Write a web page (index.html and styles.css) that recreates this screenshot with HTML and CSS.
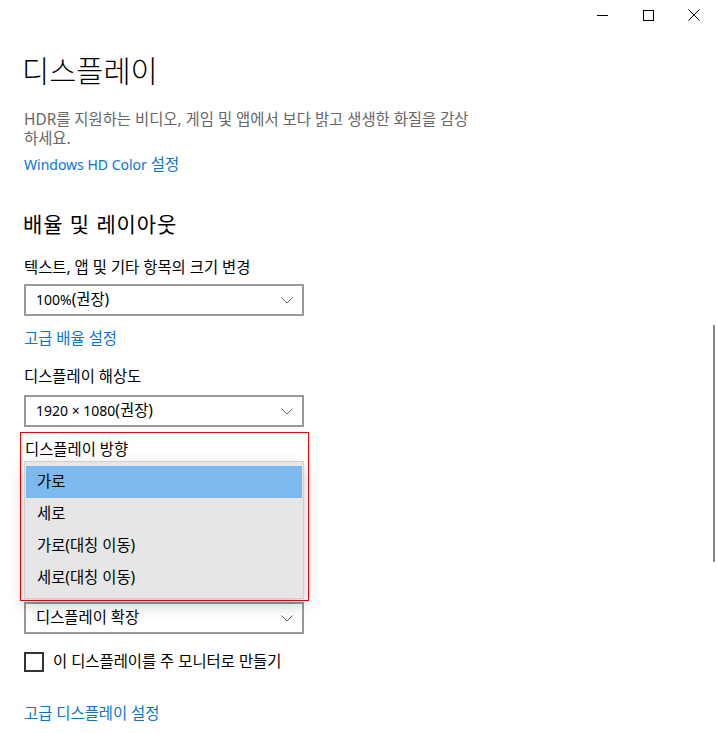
FILE: index.html
```html
<!DOCTYPE html>
<html lang="ko">
<head>
<meta charset="utf-8">
<title>디스플레이</title>
<link rel="stylesheet" href="styles.css">
</head>
<body>
<div class="window">
  <div class="titlebar">
    <div class="cap-btn">
      <svg width="12" height="12" viewBox="0 0 12 12"><path d="M1 6.5 H12" stroke="#000" stroke-width="1" fill="none"/></svg>
    </div>
    <div class="cap-btn">
      <svg width="12" height="12" viewBox="0 0 12 12"><rect x="1.5" y="1.5" width="10" height="10" stroke="#000" stroke-width="1" fill="none"/></svg>
    </div>
    <div class="cap-btn">
      <svg width="12" height="12" viewBox="0 0 12 12"><path d="M0.5 0.5 L11.5 11.5 M11.5 0.5 L0.5 11.5" stroke="#000" stroke-width="1" fill="none"/></svg>
    </div>
  </div>

  <div class="content">
    <h1 class="page-title">디스플레이</h1>
    <p class="desc">HDR를 지원하는 비디오, 게임 및 앱에서 보다 밝고 생생한 화질을 감상<br>하세요.</p>
    <a class="link link-hdr"><span class="latin">Windows HD Color</span> 설정</a>

    <h2 class="section-title">배율 및 레이아웃</h2>

    <div class="label label-first">텍스트, 앱 및 기타 항목의 크기 변경</div>
    <div class="combo combo-first">
      <span><span class="latin">100%</span>(권장)</span>
      <svg class="chev" width="12" height="7" viewBox="0 0 12 7"><path d="M0.5 0.5 L6 6 L11.5 0.5" stroke="#666" stroke-width="1" fill="none"/></svg>
    </div>
    <a class="link link-scale">고급 배율 설정</a>

    <div class="label label-res">디스플레이 해상도</div>
    <div class="combo">
      <span><span class="latin">1920 × 1080</span>(권장)</span>
      <svg class="chev" width="12" height="7" viewBox="0 0 12 7"><path d="M0.5 0.5 L6 6 L11.5 0.5" stroke="#666" stroke-width="1" fill="none"/></svg>
    </div>

    <div class="highlight">
      <div class="label label-orient">디스플레이 방향</div>
      <ul class="popup">
        <li class="item selected">가로</li>
        <li class="item">세로</li>
        <li class="item">가로(대칭 이동)</li>
        <li class="item">세로(대칭 이동)</li>
      </ul>
    </div>

    <div class="combo combo-multi">
      <span>디스플레이 확장</span>
      <svg class="chev" width="12" height="7" viewBox="0 0 12 7"><path d="M0.5 0.5 L6 6 L11.5 0.5" stroke="#666" stroke-width="1" fill="none"/></svg>
    </div>

    <label class="check-row">
      <span class="checkbox"></span>
      <span>이 디스플레이를 주 모니터로 만들기</span>
    </label>

    <a class="link link-adv">고급 디스플레이 설정</a>
  </div>

  <div class="scrollbar"></div>
</div>
</body>
</html>
```

FILE: styles.css
```css
* {
  box-sizing: border-box;
}

html, body {
  margin: 0;
  padding: 0;
  background: #ffffff;
}

body {
  font-family: "Noto Sans", "Noto Sans CJK KR", sans-serif;
  font-size: 15.4px;
  color: #000;
}

.window {
  position: relative;
  width: 717px;
  height: 733px;
  overflow: hidden;
  background: #fff;
}

.titlebar {
  display: flex;
  justify-content: flex-end;
  height: 32px;
}

.cap-btn {
  width: 46px;
  height: 32px;
  display: flex;
  align-items: center;
  justify-content: center;
}

.cap-btn svg {
  display: block;
  margin-top: -2px;
}

.content {
  padding-left: 24px;
  display: flex;
  flex-direction: column;
  align-items: flex-start;
}

.page-title {
  margin: 19px 0 0 -2px;
  font-size: 29.5px;
  font-weight: 300;
  line-height: 40px;
  color: #000;
}

.desc {
  margin: 19px 0 0;
  font-size: 15.4px;
  line-height: 19px;
  color: #666;
}

.link {
  display: block;
  color: #0b74d2;
  height: 20px;
  line-height: 20px;
  text-decoration: none;
  cursor: pointer;
}

.latin {
  font-size: 14px;
  line-height: 1;
}

.link-hdr {
  margin-top: 7px;
}

.section-title {
  margin: 35px 0 0 -1px;
  font-size: 21px;
  font-weight: 400;
  line-height: 28px;
  letter-spacing: 0.9px;
}

.label {
  height: 20px;
  line-height: 20px;
}

.label-first {
  margin-top: 20px;
}

.label-res {
  margin-top: 18px;
}

.label-orient {
  padding-left: 1px;
}

.combo {
  width: 280px;
  height: 32px;
  margin-top: 7px;
  border: 2px solid #999;
  background: #fff;
  display: flex;
  align-items: center;
  justify-content: space-between;
  padding: 0 9px 0 10px;
  line-height: 20px;
}

.combo-first {
  margin-top: 6px;
}

.chev {
  display: block;
}

.link-scale {
  margin-top: 13px;
}

.label-res + .combo {
  margin-top: 8px;
}

.highlight {
  margin: 5px 0 0 -4px;
  width: 289px;
  border: 1px solid #ff0000;
  padding: 7px 3px 1px 3px;
  position: relative;
  z-index: 2;
}

.popup {
  list-style: none;
  margin: 1px 0 0;
  width: 280px;
  padding: 4px 1px;
  background: #e6e6e6;
  border: 1px solid #cfcfcf;
  box-shadow: 0 6px 14px rgba(0, 0, 0, 0.22);
  position: relative;
  z-index: 2;
}

.item {
  height: 32px;
  line-height: 31px;
  padding-left: 11px;
  color: #000;
}

.item.selected {
  background: #7db9ee;
}

.combo-multi {
  margin-top: 1px;
  position: relative;
  z-index: 1;
}

.check-row {
  display: flex;
  align-items: center;
  gap: 9px;
  margin-top: 18px;
  line-height: 20px;
}

.checkbox {
  width: 20px;
  height: 20px;
  border: 2px solid #333;
  background: #fff;
}

.link-adv {
  margin-top: 32px;
}

.scrollbar {
  position: absolute;
  right: 2px;
  top: 325px;
  width: 2px;
  height: 237px;
  background: #868686;
}
```
